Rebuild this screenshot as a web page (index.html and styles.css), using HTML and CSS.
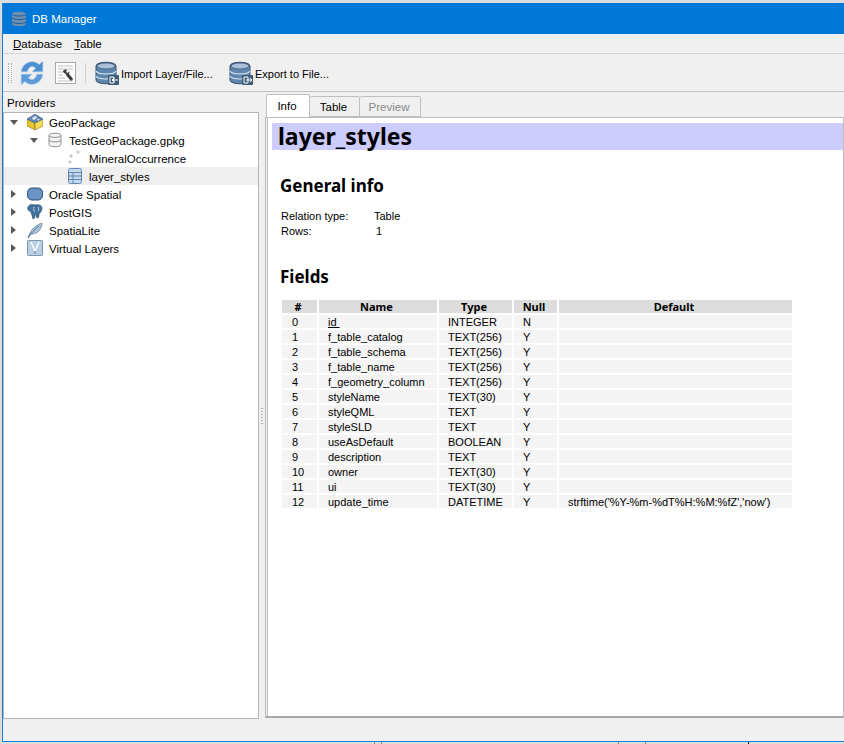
FILE: index.html
```html
<!DOCTYPE html>
<html lang="en">
<head>
    <meta charset="UTF-8">
    <title>DB Manager</title>
    <link rel="stylesheet" href="styles.css">
</head>
<body>
    <svg class="defs" width="0" height="0">
        <symbol id="db" viewBox="0 0 24 24">
            <path d="M1 5c0-5 20-5 20 0v14c0 5-20 5-20 0z" fill="#5f86b0" stroke="#34506c"/>
            <ellipse cx="11" cy="5" rx="9" ry="3" fill="#a9c0d8" stroke="#34506c" stroke-width=".7"/>
            <path d="M1 10c2 4 18 4 20 0M1 15c2 4 18 4 20 0" fill="none" stroke="#dfe8f0" stroke-width="1.2"/>
            <rect x="13" y="14" width="11" height="10" rx="1" fill="#3f5c78"/>
        </symbol>
    </svg>

    <div id="w">
        <div class="titlebar">
            <svg class="title-icon" width="16" height="16" viewBox="0 0 16 16">
                <path d="M1 3c0-3 14-3 14 0v10c0 3-14 3-14 0z" fill="#6f8fb0"/>
                <path d="M1 7c2 2 12 2 14 0M1 11c2 2 12 2 14 0M1 3.500c2 2 12 2 14 0" fill="none" stroke="#1f5f9f" stroke-width="1"/>
            </svg>
            <span>DB Manager</span>
        </div>

        <div class="menubar">
            <span><u>D</u>atabase</span>
            <span><u>T</u>able</span>
        </div>

        <div class="toolbar">
            <div class="grip"></div>
            <svg class="tool-refresh" width="24" height="24" viewBox="3 2 18 20">
                <path d="M3 11C4 3 13 0 18 5l3-3v9h-9l3-3C12 5 9 7 8 11z" fill="#4d8fd0" stroke="#a9c8e6" stroke-width=".5"/>
                <path d="M21 13c-1 8-10 11-15 6l-3 3v-9h9l-3 3c3 3 6 1 7-3z" fill="#5b9ad8" stroke="#a9c8e6" stroke-width=".5"/>
            </svg>
            <svg class="tool-doc" width="21" height="22" viewBox="0 0 21 22">
                <rect x=".5" y=".5" width="20" height="21" fill="#fff" stroke="#a8a8a8"/>
                <path d="M3 4h15M3 7h15M3 10h5M3 13h5M3 16h7M3 19h15" stroke="#c0c0c0"/>
                <path d="M8 10c0-2 2-3 4-2l-1 2 2 1 1-2c1 2 0 4-2 4z" fill="#3c3c3c"/>
                <path d="M12 12l5 6" stroke="#3c3c3c" stroke-width="3"/>
            </svg>
            <div class="tool-sep"></div>
            <div class="tool-btn">
                <svg width="24" height="24" viewBox="0 0 24 24">
                    <use href="#db"/>
                    <path d="M15 16h4v6h-4zM23 19h-6m2-2l-2 2 2 2" fill="none" stroke="#fff"/>
                </svg>
                <span>Import Layer/File...</span>
            </div>
            <div class="tool-btn">
                <svg width="24" height="24" viewBox="0 0 24 24">
                    <use href="#db"/>
                    <path d="M15 16h4v6h-4zM17 19h6m-2-2l2 2-2 2" fill="none" stroke="#fff"/>
                </svg>
                <span>Export to File...</span>
            </div>
        </div>

        <div class="main">
            <div class="left">
                <div class="providers">Providers</div>
                <div class="tree">
                    <div class="row">
                        <i class="arrow open"></i>
                        <svg width="16" height="16" viewBox="0 0 16 16">
                            <path d="M0 5l8 4v7l-8-4z" fill="#e6c22e" stroke="#6d5a10" stroke-width=".5"/>
                            <path d="M16 5l-8 4v7l8-4z" fill="#f6dc56" stroke="#6d5a10" stroke-width=".5"/>
                            <path d="M8 0l8 5-8 4-8-4z" fill="#5f87b3" stroke="#34506c" stroke-width=".5"/>
                            <path d="M5 4l3-2 2 1-1 2-3 1zM10 5l3 0-2 2z" fill="#dfe8f0"/>
                        </svg>
                        <span>GeoPackage</span>
                    </div>
                    <div class="row lv1">
                        <i class="arrow open"></i>
                        <svg width="16" height="16" viewBox="0 0 16 16">
                            <path d="M2 3.500c0-3 12-3 12 0v9c0 3-12 3-12 0z" fill="#f4f4f4" stroke="#8f8f8f"/>
                            <path d="M2 3.500c1 2.500 11 2.500 12 0M2 8c1 2.500 11 2.500 12 0" fill="none" stroke="#8f8f8f"/>
                        </svg>
                        <span>TestGeoPackage.gpkg</span>
                    </div>
                    <div class="row lv2">
                        <i class="arrow"></i>
                        <svg width="16" height="16" viewBox="0 0 16 16">
                            <circle cx="3" cy="12" r="1.100" fill="#fff" stroke="#999" stroke-width=".7"/>
                            <circle cx="4" cy="6" r="1.100" fill="#fff" stroke="#999" stroke-width=".7"/>
                            <circle cx="11" cy="2" r="1.100" fill="#fff" stroke="#999" stroke-width=".7"/>
                        </svg>
                        <span>MineralOccurrence</span>
                    </div>
                    <div class="row lv2 current">
                        <i class="arrow"></i>
                        <svg width="16" height="16" viewBox="0 0 16 16">
                            <rect x="1.500" y=".5" width="13" height="15" rx="2" fill="#c5d8ec" stroke="#5f8ab5"/>
                            <path d="M2 4.500h12M2 8h12M2 11.500h12M6 4.500v11" stroke="#5f8ab5"/>
                        </svg>
                        <span>layer_styles</span>
                    </div>
                    <div class="row">
                        <i class="arrow"></i>
                        <svg width="16" height="16" viewBox="0 0 16 16">
                            <rect x=".5" y="2" width="15" height="12" rx="4.500" fill="#6a93c6" stroke="#2f4d70"/>
                        </svg>
                        <span>Oracle Spatial</span>
                    </div>
                    <div class="row">
                        <i class="arrow"></i>
                        <svg width="16" height="16" viewBox="0 0 16 16">
                            <path d="M1 3c1-3 5-3 7-2 3-1 7 0 7 3 0 3-2 5-3 6 0 2 0 4-2 4-1-1 0-3-1-4-1 1-1 5-3 5-1-2-1-5-2-7-2-1-4-2-3-5z" fill="#44729f" stroke="#24405c" stroke-width=".6"/>
                            <path d="M7 3c-1 2 0 4 1 5M11 3c1 1 1 3 0 4" fill="none" stroke="#d5e2ee" stroke-width=".8"/>
                        </svg>
                        <span>PostGIS</span>
                    </div>
                    <div class="row">
                        <i class="arrow"></i>
                        <svg width="16" height="16" viewBox="0 0 16 16">
                            <path d="M1 16C3 11 4 5 15 1c0 5-3 9-6 10-2 1-4 1-5 1z" fill="#a9c2d8" stroke="#4f7190" stroke-width=".6"/>
                            <path d="M1 16C4 11 7 8 12 4" fill="none" stroke="#3d5c78" stroke-width=".7"/>
                        </svg>
                        <span>SpatiaLite</span>
                    </div>
                    <div class="row">
                        <i class="arrow"></i>
                        <svg width="16" height="16" viewBox="0 0 16 16">
                            <rect x=".5" y=".5" width="15" height="15" rx="1" fill="#b8cfe4" stroke="#7f97ae"/>
                            <path d="M4 2l4 9 4-9" fill="none" stroke="#fff" stroke-width="1.400"/>
                            <path d="M8 11v3" stroke="#5d7083"/>
                        </svg>
                        <span>Virtual Layers</span>
                    </div>
                </div>
            </div>

            <div class="splitter"><div class="handle"></div></div>

            <div class="right">
                <div class="tabs">
                    <div class="tab active">Info</div>
                    <div class="tab t-table">Table</div>
                    <div class="tab t-preview disabled">Preview</div>
                </div>
                <div class="pane">
                    <h1>layer_styles</h1>
                    <h2 class="general">General info</h2>
                    <div class="info">
                        <span>Relation type:</span><span>Table</span>
                        <span>Rows:</span><span class="num">1</span>
                    </div>
                    <h2 class="fields">Fields</h2>
                    <table>
                        <colgroup>
                            <col class="c-num"><col class="c-name"><col class="c-type"><col class="c-null"><col class="c-def">
                        </colgroup>
                        <tr><th>#</th><th>Name</th><th>Type</th><th>Null</th><th>Default</th></tr>
                        <tr><td>0</td><td><u>id&nbsp;</u></td><td>INTEGER</td><td>N</td><td></td></tr>
                        <tr><td>1</td><td>f_table_catalog</td><td>TEXT(256)</td><td>Y</td><td></td></tr>
                        <tr><td>2</td><td>f_table_schema</td><td>TEXT(256)</td><td>Y</td><td></td></tr>
                        <tr><td>3</td><td>f_table_name</td><td>TEXT(256)</td><td>Y</td><td></td></tr>
                        <tr><td>4</td><td>f_geometry_column</td><td>TEXT(256)</td><td>Y</td><td></td></tr>
                        <tr><td>5</td><td>styleName</td><td>TEXT(30)</td><td>Y</td><td></td></tr>
                        <tr><td>6</td><td>styleQML</td><td>TEXT</td><td>Y</td><td></td></tr>
                        <tr><td>7</td><td>styleSLD</td><td>TEXT</td><td>Y</td><td></td></tr>
                        <tr><td>8</td><td>useAsDefault</td><td>BOOLEAN</td><td>Y</td><td></td></tr>
                        <tr><td>9</td><td>description</td><td>TEXT</td><td>Y</td><td></td></tr>
                        <tr><td>10</td><td>owner</td><td>TEXT(30)</td><td>Y</td><td></td></tr>
                        <tr><td>11</td><td>ui</td><td>TEXT(30)</td><td>Y</td><td></td></tr>
                        <tr><td>12</td><td>update_time</td><td>DATETIME</td><td>Y</td><td>strftime('%Y-%m-%dT%H:%M:%fZ','now')</td></tr>
                    </table>
                </div>
            </div>
        </div>

        <div class="statusbar"></div>
    </div>
</body>
</html>
```

FILE: styles.css
```css
* {
    box-sizing: border-box;
    margin: 0;
    padding: 0;
}
html,
body {
    height: 744px;
    overflow: hidden;
}
body {
    background-color: #dcdcdc;
    /* edges of the windows behind this one */
    background-image:
        linear-gradient(#8c8c8c, #8c8c8c),
        linear-gradient(#8c8c8c, #8c8c8c),
        linear-gradient(#8c8c8c, #8c8c8c),
        linear-gradient(#8c8c8c, #8c8c8c),
        linear-gradient(#111, #111);
    background-size: 1px 2px;
    background-repeat: no-repeat;
    background-position: 374px 742px, 381px 742px, 618px 742px, 645px 742px, 748px 742px;
    font-family: "Liberation Sans", Arial, sans-serif;
    font-size: 11.5px;
    color: #000;
    padding: 3px 0 2px 2px;
}
.defs {
    display: block;
}
#w {
    height: 739px;
    display: flex;
    flex-direction: column;
    background-color: #f0f0f0;
    border-left: 1px solid #1a7fd4;
    border-bottom: 1px solid #1a7fd4;
}

/* title */
.titlebar {
    height: 31px;
    flex: none;
    display: flex;
    align-items: center;
    gap: 5px;
    padding-left: 8px;
    background-color: #0078d7;
    color: #fff;
}

/* menu */
.menubar {
    height: 20px;
    flex: none;
    display: flex;
    align-items: center;
    gap: 12px;
    padding-left: 10px;
    border-bottom: 1px solid #d4d4d4;
}

/* toolbar */
.toolbar {
    height: 38px;
    flex: none;
    display: flex;
    align-items: center;
    border-bottom: 1px solid #c4c4c4;
}
.grip {
    width: 4px;
    height: 20px;
    margin-left: 5px;
    border-left: 1px dotted #b0b0b0;
    border-right: 1px dotted #b0b0b0;
}
.tool-refresh {
    margin-left: 8px;
}
.tool-doc {
    margin-left: 11px;
}
.tool-sep {
    width: 1px;
    height: 20px;
    margin: 0 9px;
    background-color: #d0d0d0;
}
.tool-btn {
    width: 134px;
    display: flex;
    align-items: center;
    gap: 2px;
}
.tool-btn span {
    padding-top: 2px;
    font-size: 11px;
}

/* left dock */
.main {
    flex: 1;
    display: flex;
    min-height: 0;
}
.left {
    width: 256px;
    flex: none;
    display: flex;
    flex-direction: column;
}
.providers {
    height: 20px;
    padding: 3px 0 0 4px;
    line-height: 16px;
}
.tree {
    height: 607px;
    background-color: #fff;
    border: 1px solid #b4b4b4;
}
.row {
    height: 18px;
    display: flex;
    align-items: center;
    padding-left: 6px;
}
.row span {
    margin-left: 6px;
    padding-top: 2px;
}
.lv1 {
    padding-left: 26px;
}
.lv2 {
    padding-left: 46px;
}
.current {
    background-color: #efefef;
}
.arrow {
    width: 8px;
    height: 8px;
    margin-right: 9px;
    flex: none;
}
.row > .arrow:not(.open) {
    border-left: 5px solid #5a5a5a;
    border-top: 4px solid transparent;
    border-bottom: 4px solid transparent;
    margin-left: 1px;
    margin-right: 8px;
}
.lv2 > .arrow:not(.open) {
    border: none;
    margin-left: 0;
    margin-right: 9px;
}
.arrow.open {
    height: 0;
    border-top: 5px solid #5a5a5a;
    border-left: 4px solid transparent;
    border-right: 4px solid transparent;
}

.splitter {
    width: 6px;
    flex: none;
    display: flex;
    align-items: center;
    justify-content: center;
}
.handle {
    width: 2px;
    height: 18px;
    background-image: repeating-linear-gradient(#b4b4b4 0 1px, transparent 1px 3px);
}

/* right side */
.right {
    flex: 1;
    min-width: 0;
    display: flex;
    flex-direction: column;
    padding-top: 2px;
}
.tabs {
    display: flex;
    height: 23px;
    flex: none;
    align-items: flex-end;
    padding-left: 1px;
}
.tab {
    height: 21px;
    text-align: center;
    line-height: 20px;
    padding-right: 2px;
    border: 1px solid #c0c0c0;
    border-left-width: 0;
    border-radius: 2px 2px 0 0;
    background-color: #f0f0f0;
}
.tab.active {
    height: 24px;
    width: 44px;
    line-height: 23px;
    background-color: #fff;
    border-left-width: 1px;
    border-bottom: none;
    margin-bottom: -1px;
}
.t-table {
    width: 50px;
}
.t-preview {
    width: 61px;
}
.tab.disabled {
    color: #8a8a8a;
}
.pane {
    height: 601px;
    background-color: #fff;
    border: 1px solid #bdbdbd;
    border-bottom: 2px solid #a8a8a8;
    box-shadow: inset 1px 0 0 #f0f0f0, inset 2px 0 0 #bdbdbd;
    padding: 5px 0 0 6px;
}
h1 {
    height: 27px;
    padding-left: 6px;
    background-color: #ccccff;
    font-family: "Noto Sans", sans-serif;
    font-size: 23px;
    line-height: 27px;
}
h2 {
    font-family: "Noto Sans", sans-serif;
    font-size: 17px;
    line-height: 22px;
    padding-left: 8px;
}
.general {
    margin-top: 25px;
}
.fields {
    margin-top: 27px;
}
.info {
    display: grid;
    grid-template-columns: 93px auto;
    justify-content: start;
    margin: 12px 0 0 9px;
    line-height: 15px;
    font-size: 11px;
}
.num {
    padding-left: 2px;
}
table {
    table-layout: fixed;
    width: 514px;
    margin: 10px 0 0 8px;
    border-spacing: 2px;
    font-size: 11px;
}
.c-num { width: 35px; }
.c-name { width: 118px; }
.c-type { width: 73px; }
.c-null { width: 43px; }
.c-def { width: 233px; }
th,
td {
    height: 13px;
    line-height: 13px;
    padding: 0;
    white-space: nowrap;
}
th {
    background-color: #dcdcdc;
    text-align: center;
    padding-right: 3px;
    font-family: "Noto Sans", sans-serif;
}
td {
    background-color: #f4f4f4;
    padding: 1px 0 0 9px;
    line-height: 12px;
}
td:first-child {
    padding-left: 10px;
}
```
